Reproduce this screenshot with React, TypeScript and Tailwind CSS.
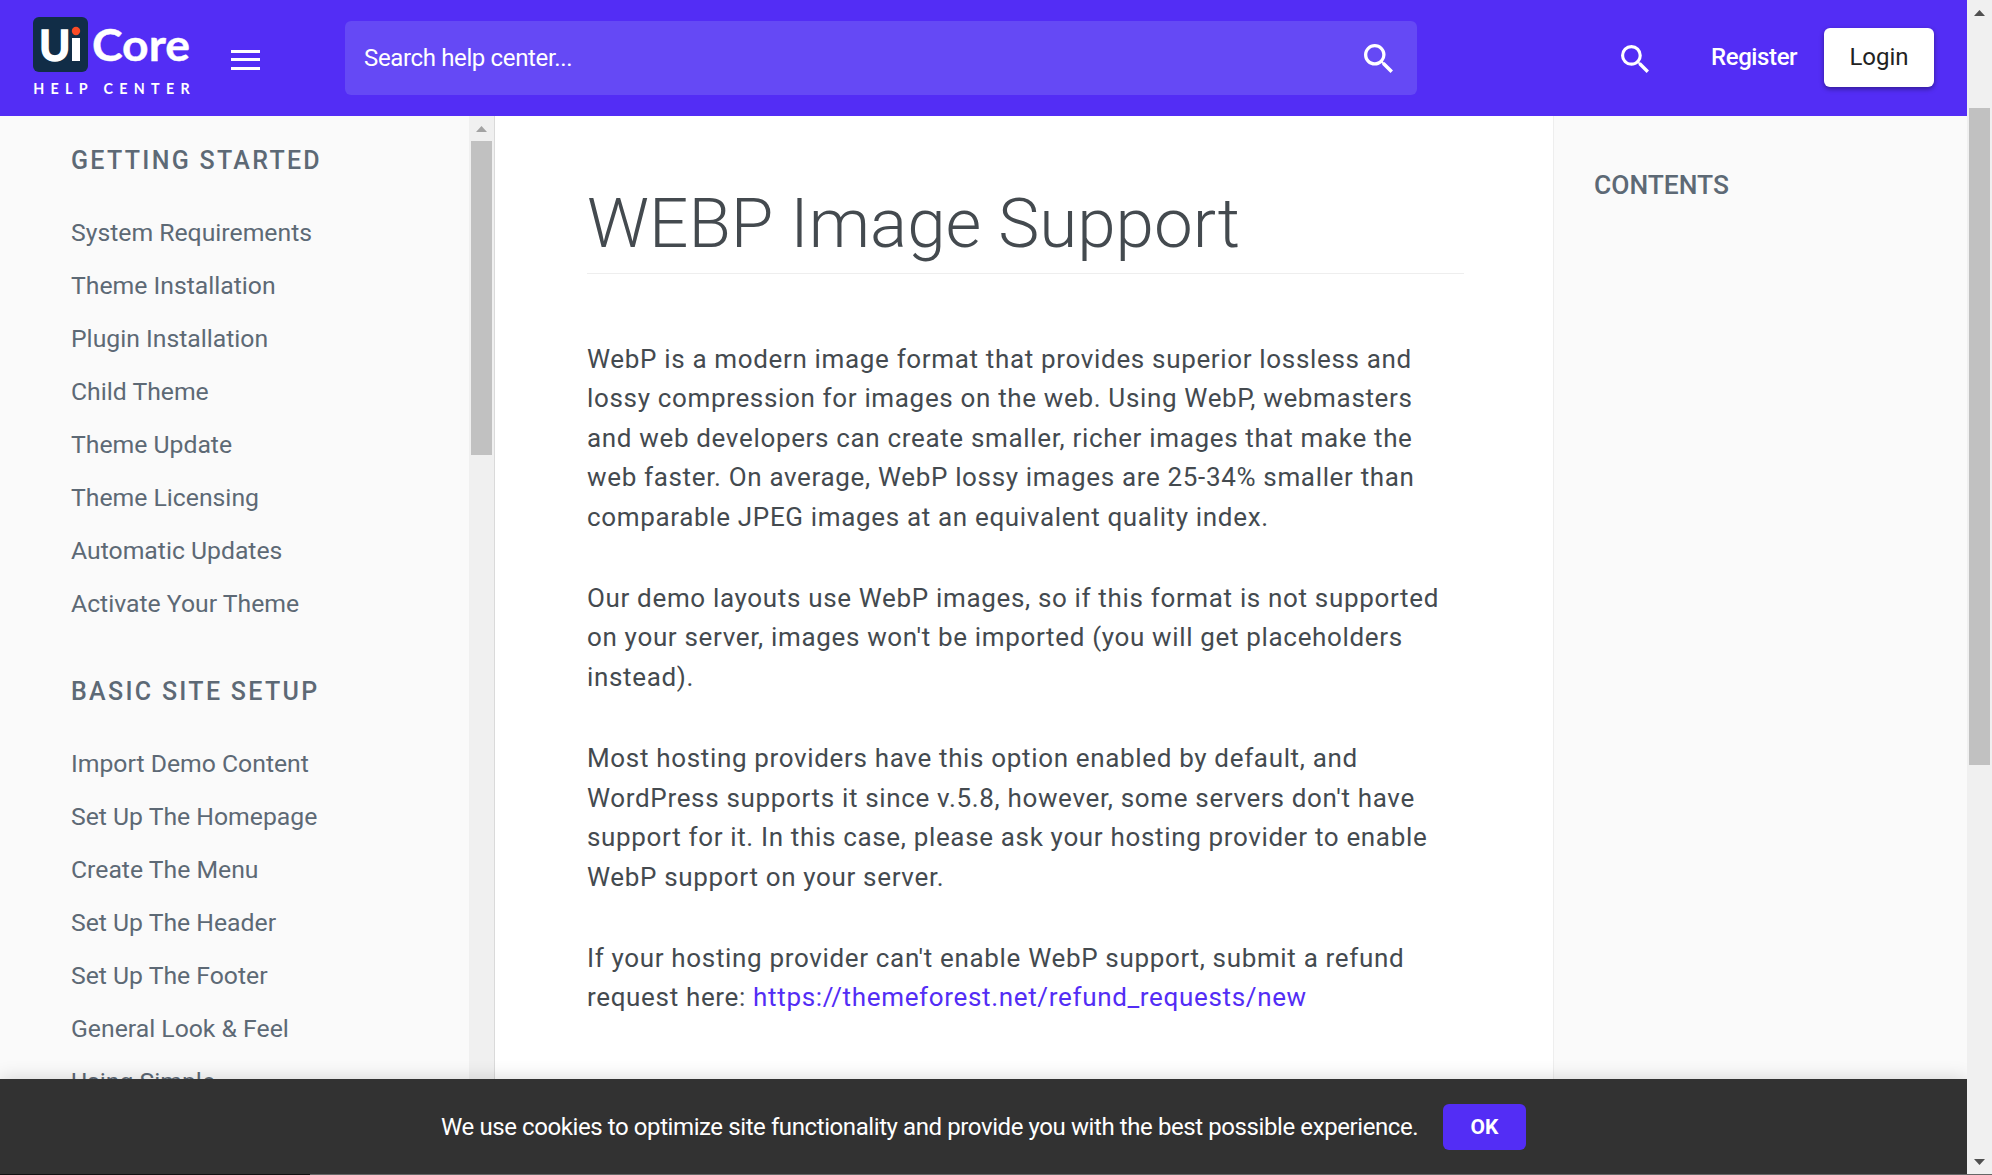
import React from 'react';

const sections = [
  {
    title: 'Getting Started',
    items: [
      'System Requirements',
      'Theme Installation',
      'Plugin Installation',
      'Child Theme',
      'Theme Update',
      'Theme Licensing',
      'Automatic Updates',
      'Activate Your Theme',
    ],
  },
  {
    title: 'Basic Site Setup',
    items: [
      'Import Demo Content',
      'Set Up The Homepage',
      'Create The Menu',
      'Set Up The Header',
      'Set Up The Footer',
      'General Look & Feel',
      'Using Simple',
    ],
  },
];

const SearchIcon = ({ className }: { className: string }) => (
  <svg viewBox="3 3 17.5 17.5" fill="currentColor" className={className}>
    <path d="M15.5 14h-.79l-.28-.27A6.471 6.471 0 0 0 16 9.5 6.5 6.5 0 1 0 9.5 16c1.61 0 3.09-.59 4.23-1.57l.27.28v.79l5 4.99L20.49 19l-4.99-5zm-6 0C7.01 14 5 11.99 5 9.5S7.01 5 9.5 5 14 7.01 14 9.5 11.99 14 9.5 14z" />
  </svg>
);

const Logo = () => (
  <svg viewBox="0 0 160 84" className="ml-[32px] h-[84px] w-[160px] shrink-0 overflow-visible" fill="#fff" fontFamily="Lato" fontWeight="700">
    <rect x="1" y="1" width="55" height="55" rx="6" fill="#112d47" />
    <text x="7.3" y="45" textLength="31" lengthAdjust="spacingAndGlyphs" stroke="#fff" strokeWidth="1.6" fontSize="42">U</text>
    <rect x="40" y="22" width="8" height="23" />
    <circle cx="44" cy="15" r="4.2" fill="#fb4b25" />
    <text x="60" y="45.4" textLength="98" lengthAdjust="spacingAndGlyphs" stroke="#fff" strokeWidth="0.4" fontSize="43">Core</text>
    <text x="1.2" y="78" textLength="156.5" fontSize="14.3">HELP CENTER</text>
  </svg>
);

const Header = () => (
  <header className="flex h-[116px] items-center bg-[#532df5] text-white">
    <Logo />
    <button className="mt-[3px] ml-[39px] flex h-[20px] w-[29px] shrink-0 flex-col justify-between">
      <span className="h-[3px] w-full bg-white" />
      <span className="h-[3px] w-full bg-white" />
      <span className="h-[3px] w-full bg-white" />
    </button>
    <div className="ml-[85px] flex h-[74px] w-[1072px] items-center justify-between rounded-md bg-[#6549f5] pr-[24px] pl-[19px]">
      <span className="text-[24px] tracking-[-0.36px]">Search help center...</span>
      <SearchIcon className="h-[29px] w-[29px]" />
    </div>
    <SearchIcon className="mt-[2px] ml-[204px] h-[28px] w-[28px]" />
    <span className="mb-[2px] ml-[62px] w-[87px] text-[24px] font-medium tracking-[-0.4px]">Register</span>
    <button className="mb-[1px] ml-[26px] h-[59px] w-[110px] rounded-md bg-white pb-[1px] text-[24px] font-normal text-[#222] shadow-[0_2px_5px_rgba(0,0,0,0.4)]">
      Login
    </button>
  </header>
);

const Sidebar = () => (
  <aside className="flex w-[495px] shrink-0 border-r border-[#dadada] bg-[#fafafa]">
    <nav className="flex-1 pt-[26px] pl-[71px] text-[#5d6975]">
      {sections.map((section) => (
        <div key={section.title} className="mb-[35px]">
          <h4 className="mb-[35px] h-[37px] text-[25px] leading-[37px] font-medium tracking-[2.3px] uppercase">
            {section.title}
          </h4>
          <ul>
            {section.items.map((item) => (
              <li key={item} className="h-[53px] text-[24.75px] leading-[38px]">
                {item}
              </li>
            ))}
          </ul>
        </div>
      ))}
    </nav>
    <div className="flex w-[25px] flex-col items-center bg-[#f0f0f0] pt-[10px]">
      <svg viewBox="0 0 11 6" className="h-[6px] w-[11px]" fill="#a3a3a3">
        <path d="M5.5 0L11 6H0z" />
      </svg>
      <div className="mt-[9px] h-[314px] w-[21px] bg-[#c1c1c1]" />
    </div>
  </aside>
);

const Article = () => (
  <main className="flex-1 bg-white pt-[64px] pl-[92px] text-[#444a4f]">
    <h1 className="h-[94px] w-[877px] border-b border-[#eee] text-[69.2px] leading-[87px] font-light whitespace-nowrap">
      WEBP Image Support
    </h1>
    <div className="mt-[65.6px] space-y-[41.3px] text-[26px] leading-[39.6px] tracking-[0.66px] whitespace-nowrap">
      <p>
        WebP is a modern image format that provides superior lossless and<br />
        lossy compression for images on the web. Using WebP, webmasters<br />
        and web developers can create smaller, richer images that make the<br />
        web faster. On average, WebP lossy images are 25-34% smaller than<br />
        comparable JPEG images at an equivalent quality index.
      </p>
      <p>
        Our demo layouts use WebP images, so if this format is not supported<br />
        on your server, images won't be imported (you will get placeholders<br />
        instead).
      </p>
      <p>
        Most hosting providers have this option enabled by default, and<br />
        WordPress supports it since v.5.8, however, some servers don't have<br />
        support for it. In this case, please ask your hosting provider to enable<br />
        WebP support on your server.
      </p>
      <p>
        If your hosting provider can't enable WebP support, submit a refund<br />
        request here: <a className="text-[#532df5]">https://themeforest.net/refund_requests/new</a>
      </p>
    </div>
  </main>
);

const CookieBar = () => (
  <div className="relative flex h-[95px] items-center bg-[#323232] pl-[441px] text-white shadow-[0_0_18px_rgba(0,0,0,0.16)]">
    <span className="w-[1002px] text-[24px] tracking-[-0.41px] whitespace-nowrap">
      We use cookies to optimize site functionality and provide you with the best possible experience.
    </span>
    <button className="h-[46px] w-[83px] rounded-md bg-[#532df5] pt-[2px] text-[21px] font-bold">OK</button>
  </div>
);

const PageScrollbar = () => (
  <div className="flex w-[25px] flex-col items-center bg-[#f0f0f0] pt-[10px] pb-[9px]">
    <svg viewBox="0 0 11 6" className="h-[6px] w-[11px]" fill="#505050">
      <path d="M5.5 0L11 6H0z" />
    </svg>
    <div className="mt-[92px] h-[657px] w-[21px] bg-[#c1c1c1]" />
    <svg viewBox="0 0 11 6" className="mt-auto h-[6px] w-[11px]" fill="#505050">
      <path d="M0 0h11L5.5 6z" />
    </svg>
  </div>
);

const App = () => {
  return (
    <div className="flex h-[1175px] w-[1992px] flex-col overflow-hidden font-['Roboto',sans-serif]">
      <div className="flex h-[1174px]">
        <div className="flex w-[1967px] flex-col overflow-hidden">
          <Header />
          <div className="flex h-[963px] overflow-hidden">
            <Sidebar />
            <Article />
            <aside className="w-[414px] shrink-0 border-l border-[#eee] bg-[#fafafa] pt-[51px] pl-[40px] text-[#5d6975]">
              <h4 className="text-[26.4px] leading-[37px] font-medium">CONTENTS</h4>
            </aside>
          </div>
          <CookieBar />
        </div>
        <PageScrollbar />
      </div>
      {/* window edge */}
      <div className="flex h-px bg-[#666]">
        <div className="w-[310px] bg-[#111]" />
      </div>
    </div>
  );
};

export default App;
